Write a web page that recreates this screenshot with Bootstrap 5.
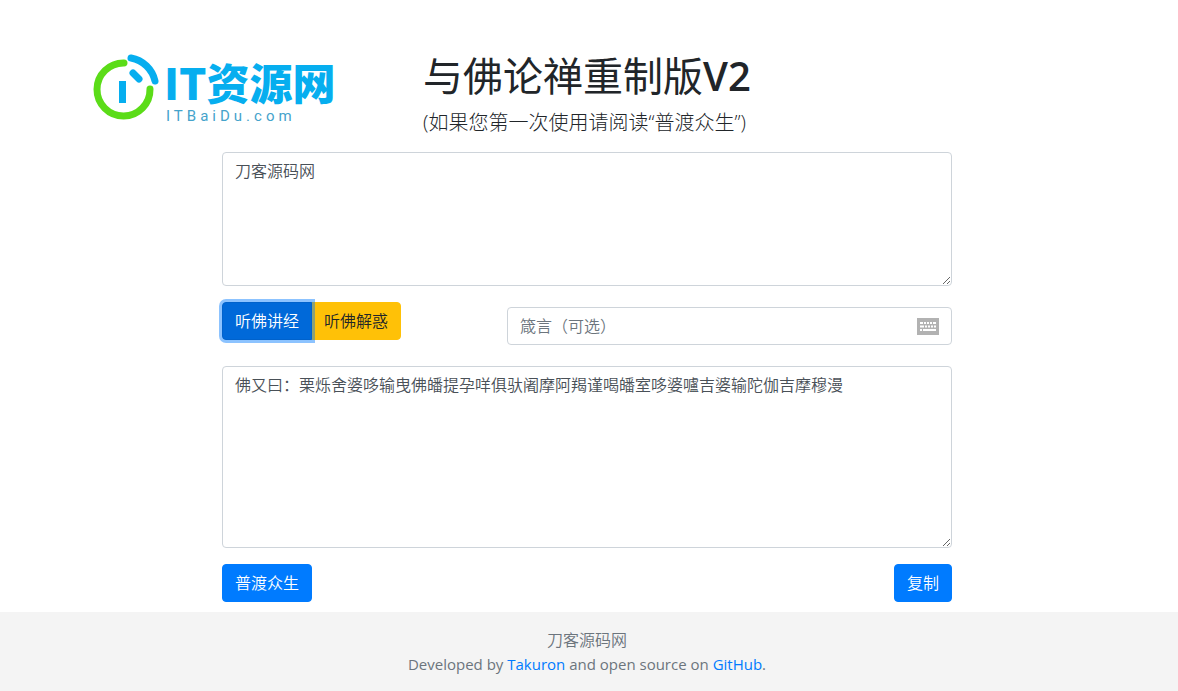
<!DOCTYPE html>
<html lang="zh-CN">
<head>
<meta charset="utf-8">
<meta name="viewport" content="width=device-width, initial-scale=1">
<title>与佛论禅重制版V2</title>
<link href="https://cdn.jsdelivr.net/npm/bootstrap@5.3.0/dist/css/bootstrap.min.css" rel="stylesheet">
<style>
  body { font-family: "Open Sans", "Noto Sans CJK SC", sans-serif; color: #212529; font-weight: 350; }
  .page-column { max-width: 730px; }
  .masthead { display: grid; grid-template-columns: 1fr auto 1fr; }
  .masthead h1 { font-size: 40px; line-height: 48px; font-weight: 400; }
  .title-latin { font-weight: 600; }
  .subtitle { font-size: 20px; line-height: 30px; font-weight: 300; margin-bottom: 14px; }
  .site-logo { width: 248px; height: 76px; margin-right: 85px; }
  .form-control { border-color: #ced4da; border-radius: 4px; color: #495057; line-height: 24px; font-weight: 350; }
  textarea.form-control { resize: vertical; display: block; }
  .form-control::placeholder { color: #6c757d; opacity: 1; }
  .btn { border-radius: 4px; line-height: 24px; font-weight: 350; }
  .btn-primary { --bs-btn-bg: #007bff; --bs-btn-border-color: #007bff; }
  .btn-primary.encode { background: #0069d9; border-color: #0062cc; box-shadow: 0 0 0 3px rgba(0,123,255,.45); z-index: 2; }
  .btn-warning { --bs-btn-bg: #ffc107; --bs-btn-color: #212529; }
  .action-row { margin-bottom: 21px; }
  .key-field { width: 445px; margin-top: 5px; }
  .key-icon { right: 13px; }
  .site-footer { background: #f4f4f4; color: #6c757d; line-height: 24px; padding: 16px 4px 15px 0; }
  .credit { font-size: 15px; font-weight: 400; }
  .site-footer a { color: #007bff; text-decoration: none; }
</style>
</head>
<body class="d-flex flex-column min-vh-100">
<header class="masthead pt-5 pe-1">
  <svg class="site-logo ms-auto" viewBox="0 0 248 76" role="img" aria-label="IT资源网">
    <g fill="none" stroke-linecap="round">
      <path d="M34 15A26.500 26.500 0 1 0 60 41" stroke="#5bdc18" stroke-width="7"/>
      <path d="M41 10A30 30 0 0 1 65 33" stroke="#06aeef" stroke-width="7"/>
      <path d="M43 25L49 31" stroke="#06aeef" stroke-width="7"/>
      <path d="M32.500 33V55" stroke="#06aeef" stroke-width="7" stroke-linecap="butt"/>
    </g>
    <text x="74" y="52" font-family="Noto Sans CJK SC, sans-serif" font-weight="900" font-size="43" fill="#06aeef">IT资源网</text>
    <text x="76" y="73" font-family="Roboto, sans-serif" font-weight="400" font-size="15" letter-spacing="4" fill="#45a3cb">ITBaiDu.com</text>
  </svg>
  <div>
    <h1 class="mt-1 mb-2">与佛论禅重制版<span class="title-latin">V2</span></h1>
    <p class="subtitle">(如果您第一次使用请阅读“普渡众生”)</p>
  </div>
</header>
<main class="flex-grow-1 pe-1">
  <form class="page-column mx-auto">
    <textarea class="form-control mb-3" rows="5" aria-label="原文">刀客源码网</textarea>
    <div class="action-row d-flex justify-content-between">
      <div class="btn-group align-self-start" role="group" aria-label="操作">
        <button type="button" class="btn btn-primary encode">听佛讲经</button>
        <button type="button" class="btn btn-warning">听佛解惑</button>
      </div>
      <div class="key-field position-relative d-flex align-items-center">
        <input type="text" class="form-control" placeholder="箴言（可选）" aria-label="箴言">
        <svg class="key-icon position-absolute" width="22" height="17" viewBox="0 0 22 17" aria-hidden="true">
          <rect width="22" height="17" fill="#b2b2b2"/>
          <g stroke="#fff" stroke-width="2">
            <path d="M3 5H6M7 5H9M10 5H12M13 5H15M16 5H19"/>
            <path d="M3 8.500H7M8 8.500H10M11 8.500H13M14 8.500H16M17 8.500H19"/>
            <path d="M3 12H5M6 12H19"/>
          </g>
        </svg>
      </div>
    </div>
    <textarea class="form-control mb-3" rows="7" aria-label="结果">佛又曰：栗烁舍婆哆输曳佛皤提孕咩俱驮阇摩阿羯谨喝皤室哆婆嚧吉婆输陀伽吉摩穆漫</textarea>
    <div class="d-flex justify-content-between">
      <button type="button" class="btn btn-primary">普渡众生</button>
      <button type="button" class="btn btn-primary">复制</button>
    </div>
  </form>
</main>
<footer class="site-footer text-center">
  <div>刀客源码网</div>
  <div class="credit">Developed by <a href="#">Takuron</a> and open source on <a href="#">GitHub</a>.</div>
</footer>
<script src="https://cdn.jsdelivr.net/npm/bootstrap@5.3.0/dist/js/bootstrap.bundle.min.js"></script>
</body>
</html>
